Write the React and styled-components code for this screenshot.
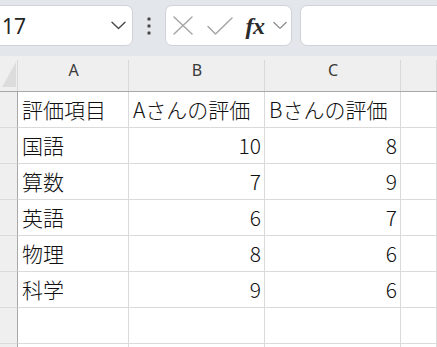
import React from "react";
import styled, { createGlobalStyle } from "styled-components";

const Global = createGlobalStyle`
  html, body { margin: 0; padding: 0; background: #ffffff; overflow: hidden; }
  body { width: 437px; height: 347px; }
  * { box-sizing: border-box; }
`;

const Page = styled.div`
  width: 437px;
  height: 347px;
  overflow: hidden;
  display: flex;
  flex-direction: column;
  background: #ffffff;
`;

const Toolbar = styled.div`
  flex: none;
  height: 56px;
  background: #e3e7eb;
  display: flex;
  align-items: flex-start;
  padding-top: 5px;
`;

const NameBox = styled.div`
  flex: none;
  margin-left: -40px;
  width: 173px;
  height: 41px;
  background: #ffffff;
  border: 1px solid #cfd2d6;
  border-radius: 7px;
  display: flex;
  align-items: center;
  justify-content: space-between;
  padding: 0 6px 0 41px;
  overflow: hidden;
`;

const NameText = styled.span`
  font-family: "Noto Sans", "Open Sans", sans-serif;
  font-size: 21px;
  color: #242424;
  line-height: 1;
  margin-top: 1px;
`;

const MoreHandle = styled.div`
  flex: none;
  width: 32px;
  height: 41px;
  display: flex;
  align-items: center;
  justify-content: center;
`;

const FxGroup = styled.div`
  flex: none;
  width: 127px;
  height: 41px;
  background: #ffffff;
  border: 1px solid #cfd2d6;
  border-radius: 7px;
  display: flex;
  align-items: center;
  padding-left: 6px;
`;

const IconSlot = styled.div`
  flex: none;
  width: ${(p) => p.$w}px;
  margin-right: ${(p) => p.$mr || 0}px;
  display: flex;
  align-items: center;
  justify-content: center;
`;

const Fx = styled.span`
  font-family: "Liberation Serif", "DejaVu Serif", serif;
  font-style: italic;
  font-weight: 700;
  font-size: 24px;
  color: #2b2b2b;
  line-height: 1;
  letter-spacing: -0.5px;
`;

const FormulaInput = styled.div`
  flex: 1;
  margin-left: 8px;
  margin-right: -20px;
  height: 41px;
  background: #ffffff;
  border: 1px solid #cfd2d6;
  border-radius: 7px;
`;

const Sheet = styled.div`
  flex: 1;
  display: grid;
  grid-template-columns: 18px 111px 136px 136px 1fr;
  grid-auto-rows: 36px;
  align-content: start;
  background: #ffffff;
`;

const Corner = styled.div`
  position: relative;
  background: #efefef;
  border-bottom: 1px solid #a8a8a8;
  display: flex;
  align-items: flex-end;
  justify-content: flex-end;
  padding: 0 2px 4px 0;
  &::after {
    content: "";
    position: absolute;
    top: 4px;
    bottom: 0;
    right: 0;
    width: 1px;
    background: #d9d9d9;
  }
`;

const ColHead = styled.div`
  position: relative;
  background: #efefef;
  border-bottom: 1px solid #a8a8a8;
  display: flex;
  align-items: center;
  justify-content: center;
  padding-bottom: 8px;
  font-family: "Noto Sans", "Open Sans", sans-serif;
  font-size: 16px;
  color: #3a3a3a;
  &::after {
    content: "";
    position: absolute;
    top: 4px;
    bottom: 0;
    right: 0;
    width: 1px;
    background: #d9d9d9;
  }
`;

const RowHead = styled.div`
  background: #efefef;
  border-right: 1px solid #a8a8a8;
  border-bottom: 1px solid #dadada;
`;

const Cell = styled.div`
  border-right: 1px solid #dadada;
  border-bottom: 1px solid #dadada;
  display: flex;
  align-items: center;
  justify-content: ${(p) => (p.$num ? "flex-end" : "flex-start")};
  padding: ${(p) => (p.$num ? "0 3px 0 0" : "0 0 0 4px")};
  font-family: "Noto Sans CJK JP", "Noto Sans", sans-serif;
  font-size: 21px;
  font-weight: 300;
  color: #111111;
  line-height: 1;
  white-space: nowrap;
  overflow: hidden;
`;

const Chevron = ({ color = "#4a4a4a", w = 15 }) => (
  <svg width={w} height="9" viewBox="0 0 15 9" fill="none">
    <path d="M1 1.2 L7.5 7.6 L14 1.2" stroke={color} strokeWidth="1.4" strokeLinecap="round" strokeLinejoin="round" />
  </svg>
);

const Dots = () => (
  <svg width="4" height="18" viewBox="0 0 4 18">
    <rect x="0.5" y="0.5" width="3" height="3" rx="0.6" fill="#474747" />
    <rect x="0.5" y="7.5" width="3" height="3" rx="0.6" fill="#474747" />
    <rect x="0.5" y="14.5" width="3" height="3" rx="0.6" fill="#474747" />
  </svg>
);

const Cross = () => (
  <svg width="20" height="19" viewBox="0 0 20 19" fill="none">
    <path d="M1 1 L19 18 M19 1 L1 18" stroke="#a6a6a6" strokeWidth="1.5" strokeLinecap="round" />
  </svg>
);

const Check = () => (
  <svg width="26" height="18" viewBox="0 0 26 18" fill="none">
    <path d="M1 9.5 L8.5 17 L25 1" stroke="#a6a6a6" strokeWidth="1.5" strokeLinecap="round" strokeLinejoin="round" />
  </svg>
);

const CornerTriangle = () => (
  <svg width="14" height="25" viewBox="0 0 14 25">
    <polygon points="14,0 14,25 0,25" fill="#dcdcdc" />
  </svg>
);

const rows = [
  ["評価項目", "Aさんの評価", "Bさんの評価", false],
  ["国語", "10", "8", true],
  ["算数", "7", "9", true],
  ["英語", "6", "7", true],
  ["物理", "8", "6", true],
  ["科学", "9", "6", true],
  ["", "", "", true],
  ["", "", "", true],
];

export default function App() {
  return (
    <Page>
      <Global />
      <Toolbar>
        <NameBox>
          <NameText>17</NameText>
          <Chevron />
        </NameBox>
        <MoreHandle>
          <Dots />
        </MoreHandle>
        <FxGroup>
          <IconSlot $w={22} $mr={12}>
            <Cross />
          </IconSlot>
          <IconSlot $w={27} $mr={9}>
            <Check />
          </IconSlot>
          <IconSlot $w={26} $mr={4}>
            <Fx>fx</Fx>
          </IconSlot>
          <IconSlot $w={16}>
            <Chevron color="#8a8a8a" w={14} />
          </IconSlot>
        </FxGroup>
        <FormulaInput />
      </Toolbar>
      <Sheet>
        <Corner>
          <CornerTriangle />
        </Corner>
        <ColHead>A</ColHead>
        <ColHead>B</ColHead>
        <ColHead>C</ColHead>
        <ColHead />
        {rows.map(([a, b, c, num], i) => (
          <React.Fragment key={i}>
            <RowHead />
            <Cell>{a}</Cell>
            <Cell $num={num}>{b}</Cell>
            <Cell $num={num}>{c}</Cell>
            <Cell />
          </React.Fragment>
        ))}
      </Sheet>
    </Page>
  );
}
